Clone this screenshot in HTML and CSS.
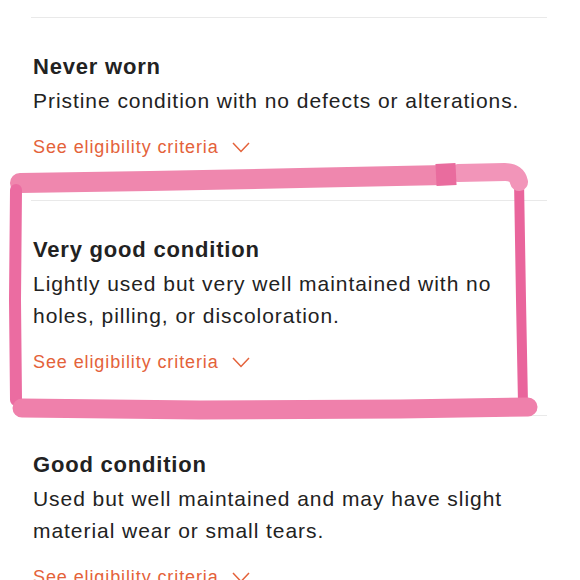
FILE: index.html
```html
<!DOCTYPE html>
<html>
<head>
<meta charset="utf-8">
<link rel="stylesheet" href="styles.css">
</head>
<body>
<div class="page">
  <div class="list">
    <section class="item">
      <h2 class="title">Never worn</h2>
      <p class="desc">Pristine condition with no defects or alterations.</p>
      <a class="link">See eligibility criteria
        <svg class="chev" width="18" height="11" viewBox="0 0 18 11"><path d="M1 1 L9 9.5 L17 1" fill="none" stroke="#e4623a" stroke-width="1.5"/></svg>
      </a>
    </section>
    <section class="item">
      <h2 class="title">Very good condition</h2>
      <p class="desc">Lightly used but very well maintained with no holes, pilling, or discoloration.</p>
      <a class="link">See eligibility criteria
        <svg class="chev" width="18" height="11" viewBox="0 0 18 11"><path d="M1 1 L9 9.5 L17 1" fill="none" stroke="#e4623a" stroke-width="1.5"/></svg>
      </a>
    </section>
    <section class="item">
      <h2 class="title">Good condition</h2>
      <p class="desc">Used but well maintained and may have slight material wear or small tears.</p>
      <a class="link">See eligibility criteria
        <svg class="chev" width="18" height="11" viewBox="0 0 18 11"><path d="M1 1 L9 9.5 L17 1" fill="none" stroke="#e4623a" stroke-width="1.5"/></svg>
      </a>
    </section>
  </div>
  <svg class="marker" width="580" height="580" viewBox="0 0 580 580">
    <g fill="none" stroke-linecap="round" stroke-linejoin="round">
      <path d="M519 180 L521 300 L523 404" stroke="#e9659c" stroke-width="10"/>
      <path d="M458 173 L505 172 Q517 172 519 182" stroke="#f295b9" stroke-width="18"/>
      <path d="M20 183 L150 181 L300 178 L445 175" stroke="#ef87ae" stroke-width="20"/>
      <path d="M436 175 L456 174" stroke="#e96c9e" stroke-width="22" stroke-linecap="butt"/>
      <path d="M16 190 L15 300 L16 400" stroke="#eb6ca1" stroke-width="12"/>
      <path d="M22 408 L200 410 L400 409 L528 407" stroke="#ef80ab" stroke-width="19"/>
    </g>
  </svg>
</div>
</body>
</html>
```
FILE: styles.css
```css
html, body {
  margin: 0;
  padding: 0;
  background: #ffffff;
}
.page {
  position: relative;
  width: 580px;
  height: 580px;
  overflow: hidden;
  font-family: "Liberation Sans", Arial, sans-serif;
  color: #222222;
}
.list {
  margin-left: 31px;
  width: 516px;
  padding-top: 17px;
}
.item {
  border-top: 1px solid #e9e9e9;
  padding: 35px 0 41px 2px;
}
.title {
  margin: 0 0 4px 0;
  font-size: 22px;
  line-height: 28px;
  font-weight: bold;
  letter-spacing: 0.8px;
  color: #222222;
}
.desc {
  margin: 0 0 18px 0;
  font-size: 21px;
  line-height: 32px;
  letter-spacing: 0.95px;
  color: #222222;
}
.link {
  display: flex;
  align-items: center;
  gap: 13px;
  font-size: 18px;
  line-height: 24px;
  letter-spacing: 0.9px;
  color: #e4623a;
}
.chev {
  display: block;
}
.marker {
  position: absolute;
  left: 0;
  top: 0;
  pointer-events: none;
}
```
